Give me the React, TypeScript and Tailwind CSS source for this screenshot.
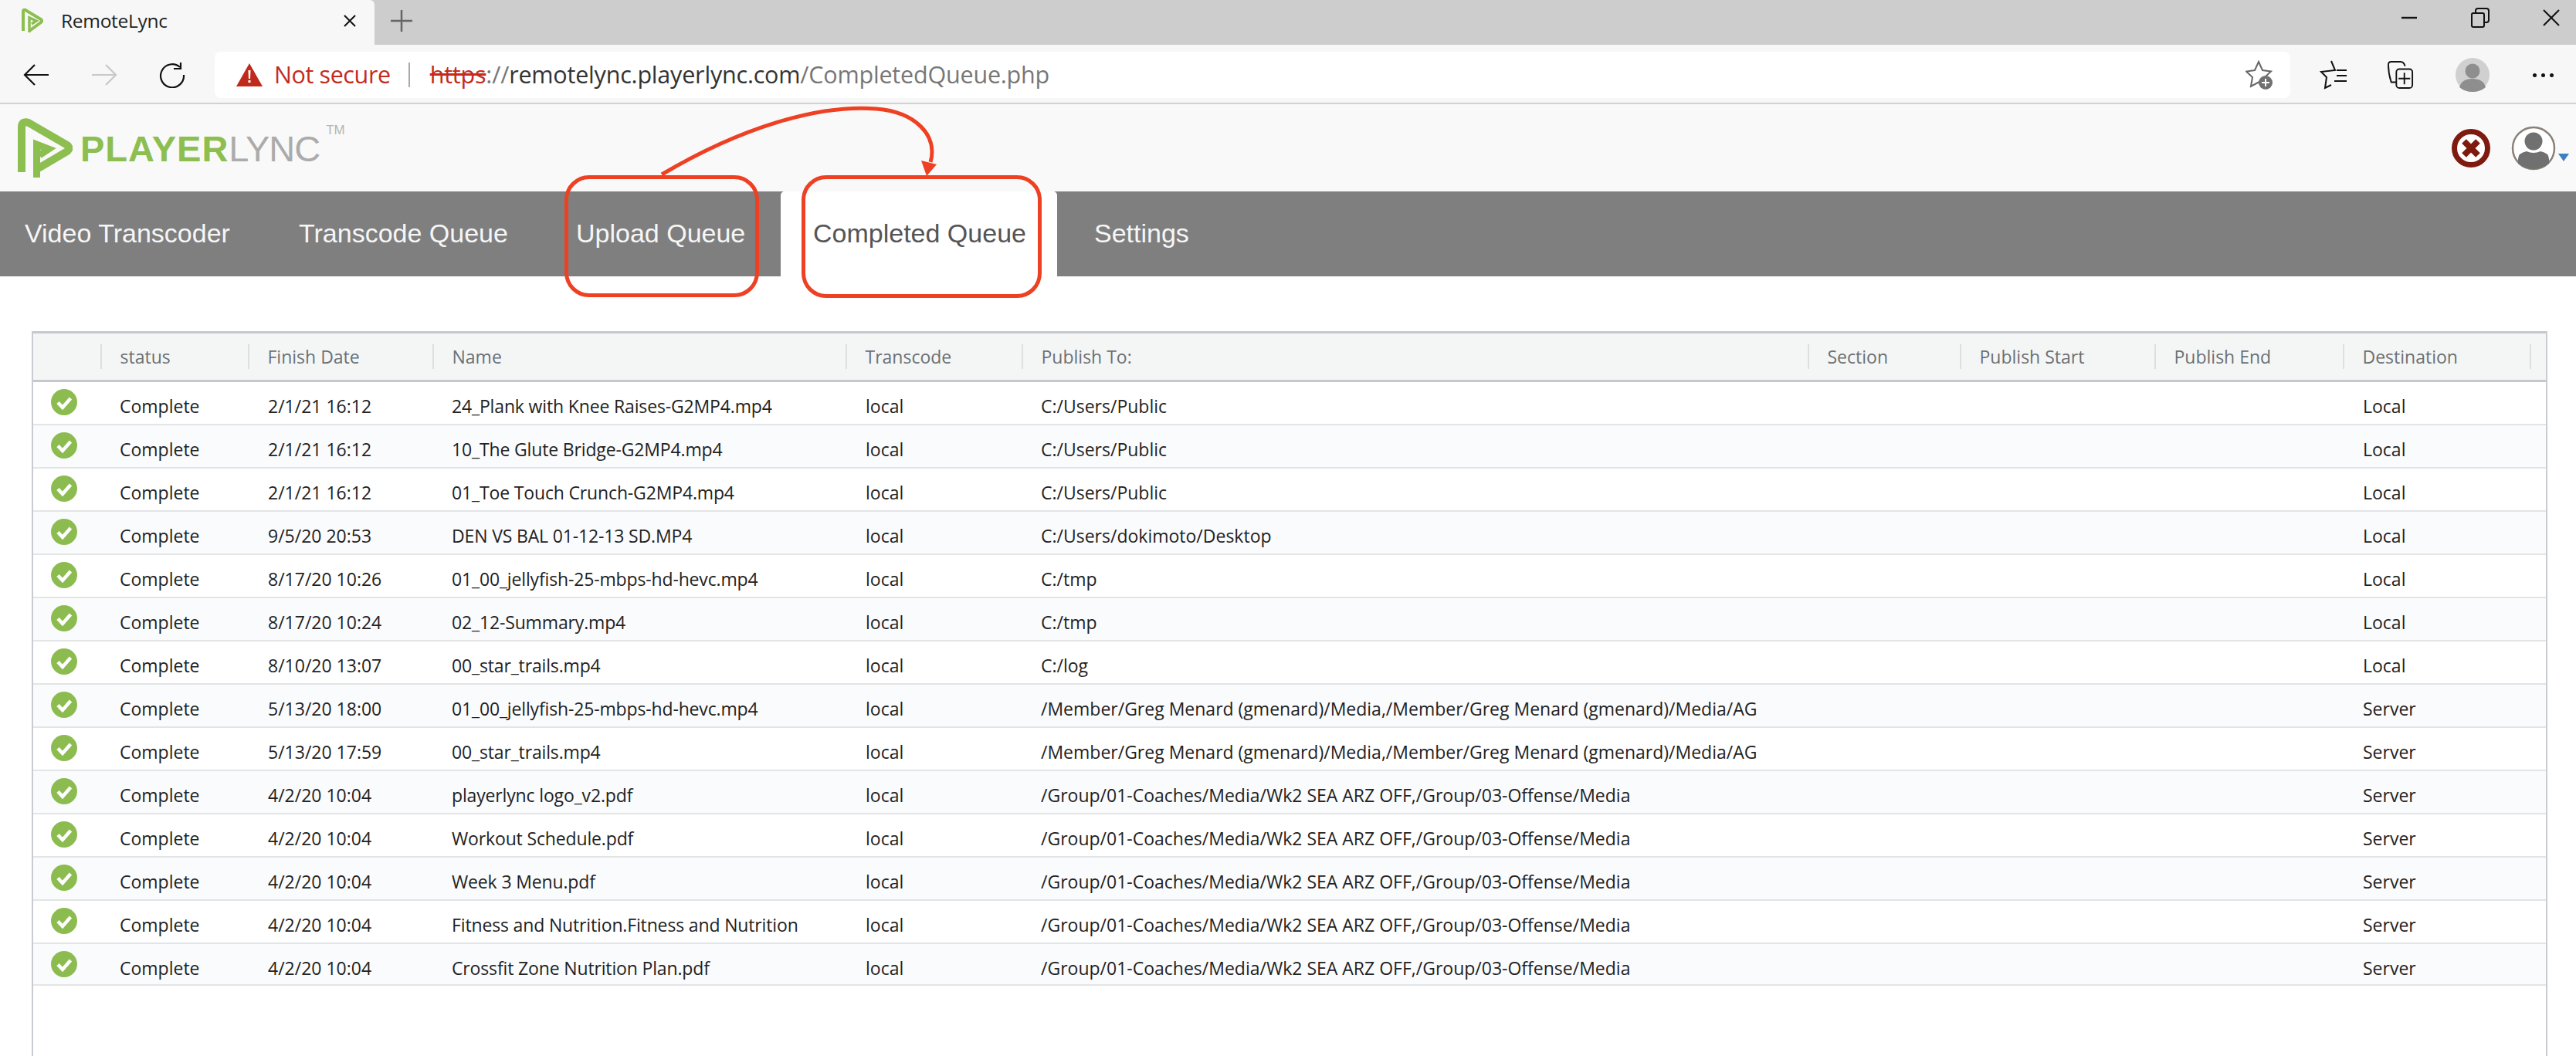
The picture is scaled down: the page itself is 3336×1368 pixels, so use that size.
const rows = [
  ["2/1/21 16:12", "24_Plank with Knee Raises-G2MP4.mp4", "C:/Users/Public", "Local"],
  ["2/1/21 16:12", "10_The Glute Bridge-G2MP4.mp4", "C:/Users/Public", "Local"],
  ["2/1/21 16:12", "01_Toe Touch Crunch-G2MP4.mp4", "C:/Users/Public", "Local"],
  ["9/5/20 20:53", "DEN VS BAL 01-12-13 SD.MP4", "C:/Users/dokimoto/Desktop", "Local"],
  ["8/17/20 10:26", "01_00_jellyfish-25-mbps-hd-hevc.mp4", "C:/tmp", "Local"],
  ["8/17/20 10:24", "02_12-Summary.mp4", "C:/tmp", "Local"],
  ["8/10/20 13:07", "00_star_trails.mp4", "C:/log", "Local"],
  ["5/13/20 18:00", "01_00_jellyfish-25-mbps-hd-hevc.mp4", "/Member/Greg Menard (gmenard)/Media,/Member/Greg Menard (gmenard)/Media/AG", "Server"],
  ["5/13/20 17:59", "00_star_trails.mp4", "/Member/Greg Menard (gmenard)/Media,/Member/Greg Menard (gmenard)/Media/AG", "Server"],
  ["4/2/20 10:04", "playerlync logo_v2.pdf", "/Group/01-Coaches/Media/Wk2 SEA ARZ OFF,/Group/03-Offense/Media", "Server"],
  ["4/2/20 10:04", "Workout Schedule.pdf", "/Group/01-Coaches/Media/Wk2 SEA ARZ OFF,/Group/03-Offense/Media", "Server"],
  ["4/2/20 10:04", "Week 3 Menu.pdf", "/Group/01-Coaches/Media/Wk2 SEA ARZ OFF,/Group/03-Offense/Media", "Server"],
  ["4/2/20 10:04", "Fitness and Nutrition.Fitness and Nutrition", "/Group/01-Coaches/Media/Wk2 SEA ARZ OFF,/Group/03-Offense/Media", "Server"],
  ["4/2/20 10:04", "Crossfit Zone Nutrition Plan.pdf", "/Group/01-Coaches/Media/Wk2 SEA ARZ OFF,/Group/03-Offense/Media", "Server"],
];

const headers = ["status", "Finish Date", "Name", "Transcode", "Publish To:", "Section", "Publish Start", "Publish End", "Destination", ""];

const cols = "grid grid-cols-[87px_191px_239px_535px_228px_1018px_197px_252px_244px_242px_1fr]";

function Favicon() {
  return (
    <svg viewBox="0 0 30 34" className="w-[30px] h-[34px]" fill="none" stroke="#8cbe50">
      <path d="M3 30V5Q3 2 6 3L26 15Q28 17 26 19L11 30" strokeWidth="4" />
      <path d="M11 32V13L20 17L14 21" strokeWidth="3.5" />
    </svg>
  );
}

function CheckIcon() {
  return (
    <svg viewBox="0 0 34 34" className="w-[34px] h-[34px] ml-[23px] mt-[-7px]">
      <circle cx="17" cy="17" r="17" fill="#8cbc50" />
      <path d="M9 17.5L15 24L25.5 12" fill="none" stroke="#fff" strokeWidth="4.5" />
    </svg>
  );
}

function NavItem({ label, className }: { label: string; className: string }) {
  return (
    <div className={"flex items-center pb-[1px] text-[34px] text-[#f6f6f6] whitespace-nowrap " + className}>
      {label}
    </div>
  );
}

export default function App() {
  return (
    <div className="relative w-[3336px] h-[1368px] overflow-hidden flex flex-col bg-white font-['Open_Sans',sans-serif]">
      {/* tab strip */}
      <div className="h-[58px] shrink-0 bg-[#cdcdcd] flex items-center">
        <div className="w-[485px] h-full bg-[#f7f7f7] rounded-tr-[6px] flex items-center pl-[27px] pr-[22px] pb-[4px]">
          <Favicon />
          <span className="ml-[22px] text-[24.5px] text-[#222] tracking-[-0.3px]">RemoteLync</span>
          <svg viewBox="0 0 20 20" className="w-[20px] h-[20px] ml-auto" stroke="#111" strokeWidth="2">
            <path d="M3 3L17 17M17 3L3 17" />
          </svg>
        </div>
        <svg viewBox="0 0 30 30" className="w-[30px] h-[30px] ml-[20px] mb-[4px]" stroke="#666" strokeWidth="2.5">
          <path d="M15 1V29M1 15H29" />
        </svg>
        <div className="ml-auto flex items-center text-black mb-[12px]">
          <svg viewBox="0 0 24 24" className="w-[24px] h-[24px] mr-[68px]" stroke="#111" strokeWidth="2.4">
            <path d="M2 12H22" />
          </svg>
          <svg viewBox="0 0 24 26" className="w-[24px] h-[26px] mr-[68px]" fill="none" stroke="#111" strokeWidth="2">
            <rect x="1" y="7" width="16" height="18" rx="2" />
            <path d="M6 7V4Q6 1 9 1H20Q23 1 23 4V16Q23 19 20 19H17" />
          </svg>
          <svg viewBox="0 0 24 24" className="w-[24px] h-[24px] mr-[20px]" stroke="#111" strokeWidth="2">
            <path d="M2 2L22 22M22 2L2 22" />
          </svg>
        </div>
      </div>

      {/* toolbar */}
      <div className="h-[77px] shrink-0 bg-[#f7f7f7] border-b-[2px] border-[#d2d2d2] flex items-center pt-[3px]">
        <svg viewBox="0 0 34 30" className="w-[34px] h-[30px] ml-[30px]" fill="none" stroke="#111" strokeWidth="2.2">
          <path d="M33 15H2M15 2L2 15L15 28" />
        </svg>
        <svg viewBox="0 0 34 30" className="w-[34px] h-[30px] ml-[54px]" fill="none" stroke="#c8c8c8" strokeWidth="2.2">
          <path d="M1 15H32M19 2L32 15L19 28" />
        </svg>
        <svg viewBox="0 0 34 34" className="w-[34px] h-[34px] ml-[54px]" fill="none" stroke="#111" strokeWidth="2.2">
          <path d="M27 7A15 15 0 1 0 32 17" />
          <path d="M28 1V9H19" />
        </svg>
        <div className="ml-[38px] w-[2688px] h-[60px] bg-white rounded-[8px] flex items-center">
          <svg viewBox="0 0 34 30" className="w-[34px] h-[30px] ml-[28px]">
            <path d="M17 0L34 30H0Z" fill="#bf2a1c" />
            <path d="M15.5 9H18.5L18 20H16Z M15.5 22H18.5V25H15.5Z" fill="#fff" />
          </svg>
          <span className="ml-[15px] text-[#c42b1c] text-[30.5px] tracking-[-0.4px]">Not secure</span>
          <span className="ml-[23px] w-[2px] h-[32px] bg-[#aaa]" />
          <span className="ml-[26px] text-[30.5px] tracking-[-0.2px] whitespace-nowrap">
            <span className="text-[#c42b1c] line-through">https</span>
            <span className="text-[#777]">://</span>
            <span className="text-[#333]">remotelync.playerlync.com</span>
            <span className="text-[#777]">/CompletedQueue.php</span>
          </span>
          <svg viewBox="0 0 36 38" className="w-[36px] h-[38px] ml-auto mr-[22px]" fill="none">
            <path d="M17 2L22 13L33 14.5L25 22L27 34L17 28.5L7 34L9 22L1 14.5L12 13Z" stroke="#666" strokeWidth="2" />
            <circle cx="26" cy="29" r="9" fill="#707070" />
            <path d="M26 24V34M21 29H31" stroke="#fff" strokeWidth="2" />
          </svg>
        </div>
        <svg viewBox="0 0 36 40" className="w-[36px] h-[40px] ml-[38px]" fill="none" stroke="#111" strokeWidth="2">
          <path d="M15 2L20 14L2 16L9 23L7 37L15 33M22 14H35M22 21H35M19 28H35" />
        </svg>
        <svg viewBox="0 0 36 40" className="w-[34px] h-[40px] ml-[52px]" fill="none" stroke="#111" strokeWidth="2">
          <path d="M12 30L5 30Q1 18 1 6Q1 2 5 2H18Q22 2 24 8" />
          <rect x="12" y="12" width="22" height="26" rx="4" />
          <path d="M23 17V33M15 25H31" />
        </svg>
        <svg viewBox="0 0 44 44" className="w-[44px] h-[44px] ml-[54px]">
          <circle cx="22" cy="22" r="22" fill="#d0d0d0" />
          <circle cx="22" cy="17" r="9.5" fill="#8e8e8e" />
          <path d="M5 38Q8 27 22 27Q36 27 39 38Q32 44 22 44Q12 44 5 38Z" fill="#8e8e8e" />
        </svg>
        <div className="ml-[56px] flex gap-[6px]">
          <span className="w-[5px] h-[5px] rounded-full bg-[#111]" />
          <span className="w-[5px] h-[5px] rounded-full bg-[#111]" />
          <span className="w-[5px] h-[5px] rounded-full bg-[#111]" />
        </div>
      </div>

      {/* app header */}
      <div className="h-[113px] shrink-0 bg-[#f9f9f9] flex items-center">
        <svg viewBox="0 0 72 78" className="w-[72px] h-[78px] ml-[22px]" fill="none" stroke="#8cbe50">
          <path d="M6 70V12Q6 3 15 6L65 35Q70 39 65 43L26 66" strokeWidth="10" strokeLinejoin="round" />
          <path d="M25.5 77V34L41 40L29 48" strokeWidth="9" />
        </svg>
        <div className="ml-[10px] mt-[2px] flex items-start leading-none text-[47px] font-['Liberation_Sans',sans-serif]">
          <span className="font-bold text-[#8cbe50] tracking-[1px]">PLAYER</span>
          <span className="text-[#ababab] tracking-[-1px]">LYNC</span>
          <span className="ml-[8px] mt-[-9px] text-[#b5b5b5] text-[17px]">TM</span>
        </div>
        <svg viewBox="0 0 50 52" className="w-[50px] h-[52px] ml-auto">
          <circle cx="25" cy="26" r="21.5" fill="#fff" stroke="#7f1a0e" strokeWidth="7" />
          <path d="M16 17L34 35M34 17L16 35" stroke="#7f1a0e" strokeWidth="8" />
        </svg>
        <svg viewBox="0 0 58 58" className="w-[58px] h-[58px] ml-[27px]">
          <circle cx="29" cy="29" r="27" fill="#fff" stroke="#8a8078" strokeWidth="2.5" />
          <circle cx="29" cy="20" r="11.5" fill="#707070" />
          <path d="M9 49V43Q9 35 20 33Q29 37 38 33Q49 35 49 43V49Q40 56 29 56Q18 56 9 49Z" fill="#707070" />
        </svg>
        <svg viewBox="0 0 14 10" className="w-[14px] h-[10px] ml-[3px] mr-[9px] mt-[24px]">
          <path d="M0 0H14L7 10Z" fill="#3f7fbf" />
        </svg>
      </div>

      {/* nav */}
      <div className="h-[110px] shrink-0 bg-[#7f7f7f] flex items-stretch font-['Liberation_Sans',sans-serif]">
        <NavItem label="Video Transcoder" className="w-[387px] pl-[32px]" />
        <NavItem label="Transcode Queue" className="w-[359px]" />
        <NavItem label="Upload Queue" className="w-[265px]" />
        <div className="w-[358px] bg-white rounded-t-[5px] flex items-center pl-[42px] pb-[1px] text-[34px] text-[#555]">
          Completed Queue
        </div>
        <NavItem label="Settings" className="pl-[48px]" />
      </div>

      {/* table */}
      <div className="flex-1 ml-[41px] mr-[37px] mt-[71px] border-x-[2px] border-[#c8ccd0] text-[23px] text-[#222]">
        <div className={cols + " h-[66px] items-center bg-[#f4f6f6] border-y-[3px] border-[#c5c8cc] text-[#6b7075]"}>
          <div />
          {headers.map((h, i) => (
            <div key={i} className="h-[32px] pl-[23.5px] border-l-[2px] border-[#dcdfe0] flex items-center whitespace-nowrap">
              {h}
            </div>
          ))}
        </div>
        {rows.map((r, i) => (
          <div
            key={i}
            className={cols + " h-[56px] first:h-[57px] last:h-[54px] pt-[16px] first:pt-[14px] items-start content-start leading-[30px] border-b-[2px] border-[#e2e4e6] whitespace-nowrap " + (i % 2 ? "bg-[#fafbfd]" : "bg-white")}
          >
            <CheckIcon />
            <div className="pl-[25px]">Complete</div>
            <div className="pl-[26px]">{r[0]}</div>
            <div className="pl-[25px] tracking-[-0.15px]">{r[1]}</div>
            <div className="pl-[26px]">local</div>
            <div className="pl-[25px]">{r[2]}</div>
            <div />
            <div />
            <div />
            <div className="pl-[26px]">{r[3]}</div>
            <div />
          </div>
        ))}
      </div>

      {/* red annotations */}
      <div className="absolute left-[731px] top-[227px] w-[252px] h-[158px] border-[5px] border-[#ee4023] rounded-[32px]" />
      <div className="absolute left-[1038px] top-[227px] w-[311px] h-[159px] border-[5px] border-[#ee4023] rounded-[32px]" />
      <svg viewBox="840 130 400 110" className="absolute left-[840px] top-[130px] w-[400px] h-[110px]" fill="none">
        <path d="M857 226C960 165 1060 135 1135 141C1185 145 1215 175 1205 210" stroke="#ee4023" strokeWidth="5" />
        <path d="M1193 208L1213 213L1200 228Z" fill="#ee4023" />
      </svg>
    </div>
  );
}
